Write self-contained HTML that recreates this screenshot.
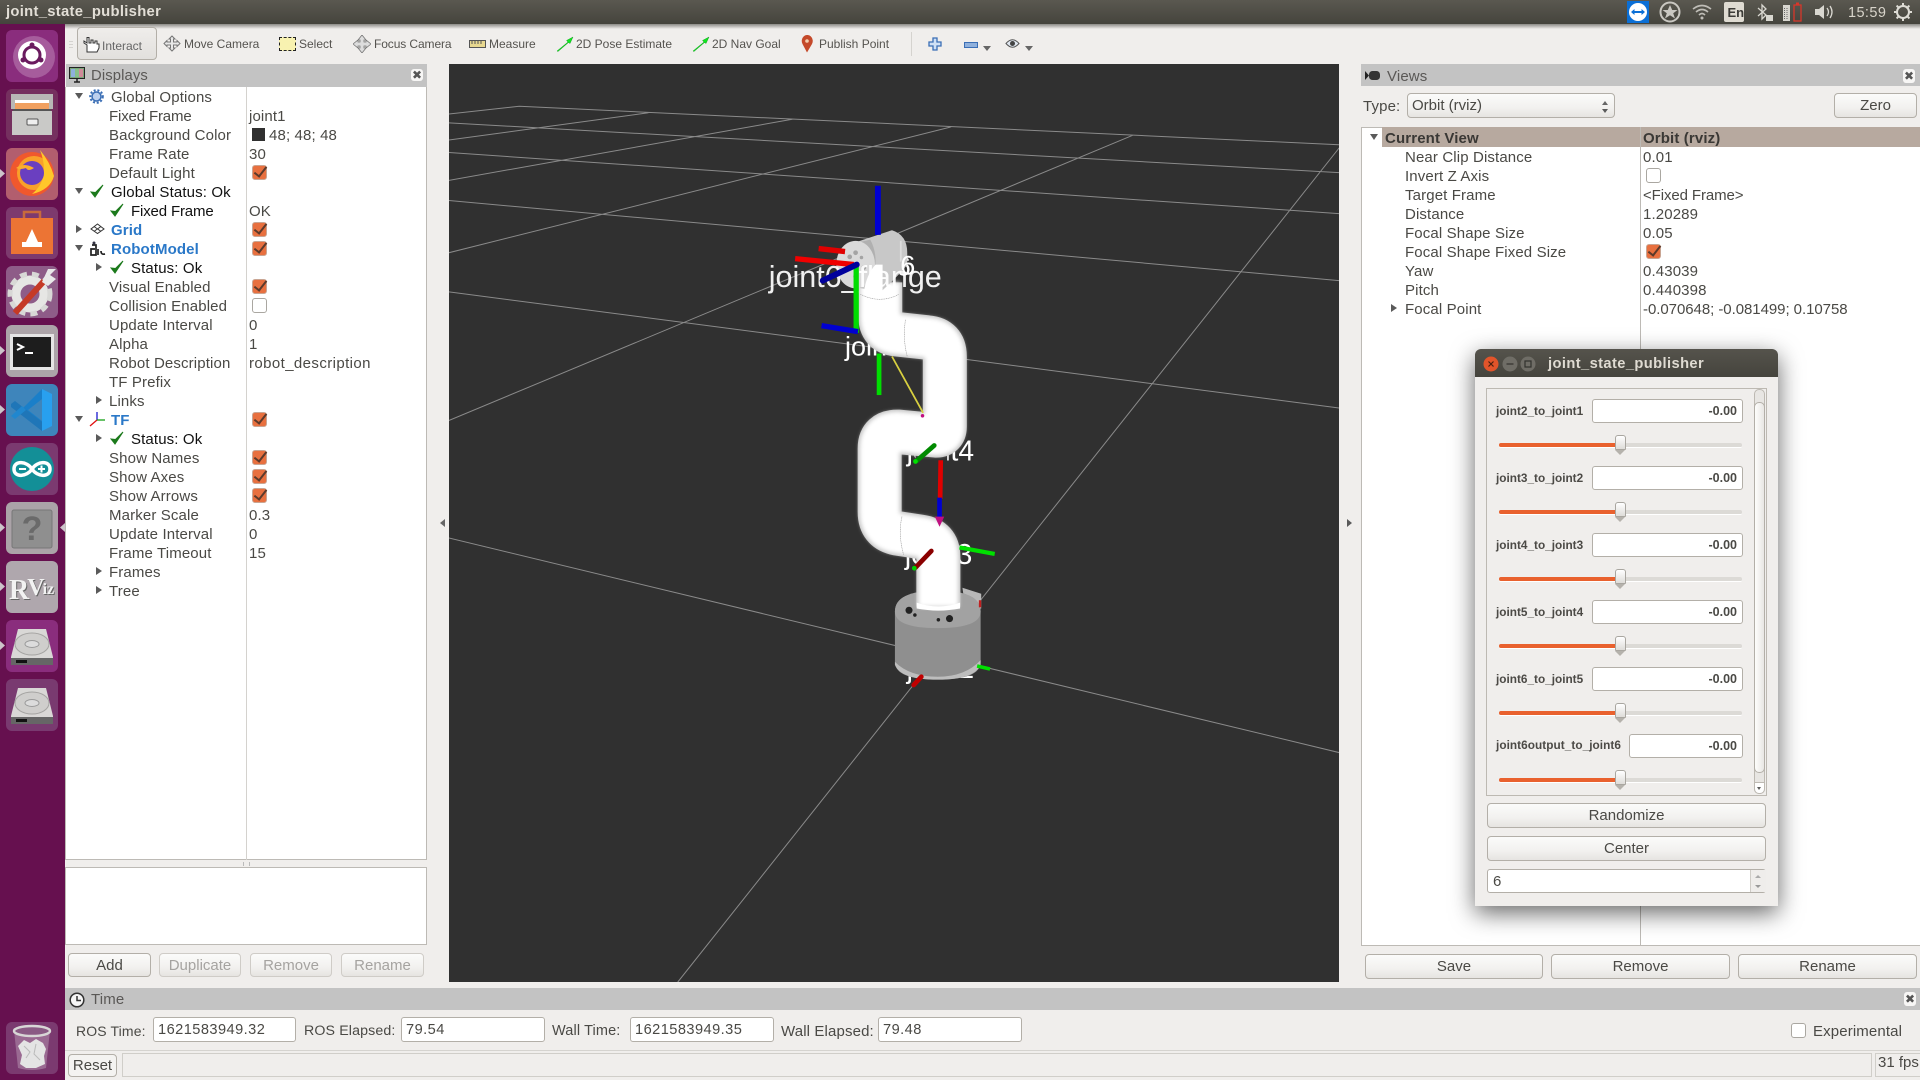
<!DOCTYPE html>
<html><head><meta charset="utf-8"><title>joint_state_publisher</title>
<style>
html,body{margin:0;padding:0;width:1920px;height:1080px;overflow:hidden;background:#f0eeec}
body{position:relative;font-family:"Liberation Sans",sans-serif;font-size:15px;color:#4a4945}
.a,.t,.b,.bar,.cb,.ub,.ad,.ar,.in,svg.p{position:absolute}
.t{white-space:nowrap;line-height:19px;letter-spacing:.13px;margin-top:1px}
.k{color:#111}
.bl{color:#2a78c8;font-weight:bold;font-size:15px}
.tb{font-size:12px;line-height:16px;top:36px;color:#55534f;letter-spacing:0;margin-top:0}
.bar{background:#c3c3c3}
.b{box-sizing:border-box;border:1px solid #b3afa8;border-radius:4px;background:linear-gradient(#fbfbfa,#f2f1ef 60%,#e6e4e1);text-align:center;line-height:24px;font-size:15px;color:#4a4945;white-space:nowrap}
.dis{color:#a5a3a0;border-color:#cfccc7}
.in{box-sizing:border-box;border:1px solid #b3afa8;border-radius:3px;background:#fff;line-height:24px;white-space:nowrap;color:#4a4945}
.ti{letter-spacing:.45px;font-size:14.6px}
.cb,.ub{left:252px;width:15px;height:15px;box-sizing:border-box;border-radius:3px}
.cb{background:#e8703f;border:1px solid #c9a593}
.ub{background:#fff;border:1px solid #aaa7a1}
.cb:after{content:"";position:absolute;left:4px;top:-2px;width:5px;height:11px;border:solid #5c3a2b;border-width:0 2.5px 2.5px 0;transform:rotate(38deg)}
.ad{width:0;height:0;border-left:4px solid transparent;border-right:4px solid transparent;border-top:6px solid #5a5a5a}
.ar{width:0;height:0;border-top:4px solid transparent;border-bottom:4px solid transparent;border-left:6px solid #5a5a5a}
.x{position:absolute;width:12px;height:12px;background:#f7f6f5;border-radius:3px;color:#555;font:bold 12px/12px "DejaVu Sans",sans-serif;text-align:center}
.lab{position:absolute;left:1496px;font:bold 11.8px/16px "Liberation Sans",sans-serif;color:#4c4a46;white-space:nowrap}
.val{font:bold 12.5px/22px "Liberation Sans",sans-serif;text-align:right;padding-right:5px;top:0}
.tr{position:absolute;left:1499px;width:243px;height:4px;background:#dcdad6;border-radius:2px;border-bottom:1px solid #fff;margin-top:1px}
.fi{position:absolute;left:1499px;width:121px;height:4px;background:#e9612e;border-radius:2px;margin-top:1px}
.th{position:absolute;left:1615px;width:9px;height:13px;background:linear-gradient(#fff,#dedcd8);border:1px solid #a9a6a0;border-radius:3px 3px 1px 1px;margin-top:0}
.th2{position:absolute;left:1615px;width:0;height:0;border-left:5.5px solid transparent;border-right:5.5px solid transparent;border-top:5px solid #b5b2ac;margin-top:1px}
</style></head><body>
<svg width="0" height="0" style="position:absolute"><defs>
<symbol id="tick" viewBox="0 0 14 14"><path d="M1 8 L5 13 L13 1 L5.5 8.5 Z" fill="#1c7a1c" stroke="#1c7a1c" stroke-width="1"/></symbol>
<symbol id="disk" viewBox="0 0 52 52"><path d="M12 9H40L47 37V45H5V37Z" fill="#d9d8d6"/><ellipse cx="26" cy="24" rx="17" ry="11" fill="#cfcecc" stroke="#a5a4a2"/><ellipse cx="26" cy="24" rx="7" ry="3.500" fill="#dcdcdc" stroke="#9a9a9a"/><rect x="5" y="38" width="42" height="7" fill="#666"/><rect x="10" y="40" width="11" height="3" fill="#111"/></symbol>
</defs></svg>

<!-- top bar -->
<div class="a" style="left:0;top:0;width:1920px;height:24px;background:linear-gradient(#5a5850,#45443d)"></div>
<div class="a" style="left:65px;top:24px;width:1855px;height:5px;background:linear-gradient(#8b8a86,#f0eeec)"></div>
<div class="t" style="left:6px;top:2px;font-weight:bold;font-size:14.800px;color:#e2ded6;letter-spacing:.3px">joint_state_publisher</div>
<svg class="p" style="left:1620px;top:0" width="300" height="24">
<rect x="7" y="1" width="22" height="22" fill="#0b6fd6"/><circle cx="18" cy="12" r="9" fill="#fff"/><path d="M11 12L14.500 9V11H21.500V9L25 12L21.500 15V13H14.500V15Z" fill="#0b6fd6"/>
<circle cx="50" cy="12" r="9.500" fill="none" stroke="#c9c7c1" stroke-width="2"/><path d="M50 5L52.200 10H57.500L53.200 13.200L55 18.500L50 15.300L45 18.500L46.800 13.200L42.500 10H47.800Z" fill="#c9c7c1"/>
<path d="M73 9Q82 2 91 9M76 12Q82 7 88 12M79 15Q82 12 85 15" fill="none" stroke="#bfbdb7" stroke-width="1.600"/><circle cx="82" cy="18" r="1.500" fill="#bfbdb7"/>
<rect x="104" y="2" width="20" height="20" rx="2" fill="#dfdbd2"/><text x="107.500" y="17" font-family="Liberation Sans" font-size="13" font-weight="bold" fill="#3c3b37">En</text>
<path d="M138 8L146 15L142 19V5L146 9L138 16" fill="none" stroke="#d9d7d0" stroke-width="1.300"/><rect x="146" y="15" width="7" height="6" fill="#d9d7d0"/>
<rect x="163" y="5" width="7" height="16" fill="#d9d7d0"/><path d="M164.500 8v11M167 8v11" stroke="#666" stroke-dasharray="1 1"/><rect x="174" y="5" width="7" height="16" fill="none" stroke="#d8362a" stroke-width="1.300"/><rect x="176" y="2.500" width="3" height="2" fill="#d8362a"/>
<path d="M195 9H199L204 5V19L199 15H195Z" fill="#d9d7d0"/><path d="M207 8Q210 12 207 16M210 6Q214 12 210 18" fill="none" stroke="#d9d7d0" stroke-width="1.300"/>
<text x="228" y="17" font-family="Liberation Sans" font-size="14.500" fill="#d8d4ca" letter-spacing=".4">15:59</text>
<circle cx="283" cy="12" r="6" fill="none" stroke="#dedcd5" stroke-width="2"/><path d="M283 3V7M283 17V21M274 12H278M288 12H292M276.600 5.600L279.500 8.500M289.400 5.600L286.500 8.500M276.600 18.400L279.500 15.500M289.400 18.400L286.500 15.500" stroke="#dedcd5" stroke-width="2"/>
</svg>

<!-- launcher -->
<svg class="p" style="left:0;top:24px;background:#66104f" width="65" height="1056" viewBox="0 24 65 1056">
<g transform="translate(6,30)"><rect width="52" height="52" rx="6" fill="#8a2d7d"/><circle cx="28" cy="27" r="21" fill="#a65c9c"/><circle cx="26" cy="25" r="14" fill="#fff"/><circle cx="26" cy="25" r="8" fill="none" stroke="#6a1b5f" stroke-width="3"/><circle cx="26" cy="15" r="2.500" fill="#6a1b5f"/><circle cx="17" cy="30" r="2.500" fill="#6a1b5f"/><circle cx="35" cy="30" r="2.500" fill="#6a1b5f"/></g>
<g transform="translate(6,89)"><rect width="52" height="52" rx="6" fill="#75305f"/><path d="M5 5H47V20H5Z" fill="#b8b8b6"/><rect x="9" y="13" width="34" height="7" fill="#f0a060"/><rect x="9" y="11" width="34" height="3" fill="#fff"/><rect x="7" y="20" width="38" height="2" fill="#555"/><path d="M6 22H46V46H6Z" fill="#c9c9c7"/><rect x="21" y="30" width="11" height="6" rx="1" fill="#eee" stroke="#555"/></g>
<g transform="translate(6,148)"><rect width="52" height="52" rx="6" fill="#b25e6e"/><circle cx="26" cy="26" r="22" fill="#f0582d"/><circle cx="28" cy="25" r="17" fill="#f9a02a"/><path d="M34 2Q44 14 48 28Q44 42 26 46Q38 36 38 22Q38 12 34 2" fill="#ffc72a"/><circle cx="26" cy="25" r="12" fill="#6a3fc0"/><path d="M10 20Q18 14 28 20Q22 24 20 20Q14 22 10 20Z" fill="#fbae2e"/></g>
<g transform="translate(6,207)"><rect width="52" height="52" rx="6" fill="#7d3a6e"/><path d="M5 11H47V47H5Z" fill="#ec7434"/><path d="M18 11V5H34V11" fill="none" stroke="#c86a3c" stroke-width="2.500"/><path d="M26 22L20 35H32Z M16 35H36V40H16Z" fill="#fff"/></g>
<g transform="translate(6,266)"><rect width="52" height="52" rx="6" fill="#8e5c88"/><circle cx="24" cy="28" r="14" fill="none" stroke="#e6e6e4" stroke-width="9"/><circle cx="24" cy="28" r="20" fill="none" stroke="#d8d8d6" stroke-width="5" stroke-dasharray="7 5"/><path d="M9 47L38 15" stroke="#c53a26" stroke-width="6"/><path d="M36 16L42 3L50 3L44 9L50 13L42 20Z" fill="#e8e8e8"/></g>
<g transform="translate(6,325)"><rect width="52" height="52" rx="6" fill="#aca4a9"/><rect x="4" y="9" width="44" height="36" fill="#e5e5e5"/><rect x="7" y="12" width="38" height="30" fill="#1d1d1d"/><path d="M11 19L17 22L11 25" fill="none" stroke="#fff" stroke-width="2"/><rect x="19" y="27" width="8" height="2" fill="#fff"/></g>
<g transform="translate(6,384)"><rect width="52" height="52" rx="6" fill="#3e85bb"/><path d="M36 5L46 10V42L36 47Z" fill="#28a0ef"/><path d="M36 5L15 26L36 47L36 37L22 26L36 15Z" fill="#1a7fc9"/><path d="M5 20L9 17L36 38V47L5 23Z" fill="#1f76b8"/><path d="M5 32L9 35L20 26L16 22Z" fill="#2087cf"/></g>
<g transform="translate(6,443)"><rect width="52" height="52" rx="6" fill="#7b3a70"/><circle cx="26" cy="26" r="22" fill="#138f97"/><path d="M26 26C21 18 8 17 8 26C8 35 21 34 26 26C31 18 44 17 44 26C44 35 31 34 26 26Z" fill="none" stroke="#fff" stroke-width="3.500"/><path d="M13 26H20M32 26H39M35.500 22.500V29.500" stroke="#fff" stroke-width="2"/></g>
<g transform="translate(6,502)"><rect width="52" height="52" rx="6" fill="#aba3a8"/><rect x="6" y="8" width="40" height="38" rx="2" fill="#8f8f8f" stroke="#777"/><text x="26" y="38" font-family="Liberation Sans" font-weight="bold" font-size="34" text-anchor="middle" fill="#6a6a6a">?</text></g>
<g transform="translate(6,561)"><rect width="52" height="52" rx="6" fill="#afa7ad"/><text x="3" y="38" font-family="Liberation Serif" font-weight="bold" font-size="28" fill="#f2f2f2" style="filter:drop-shadow(1px 1px 0 #666)">R<tspan dx="-2" dy="-4" font-size="24">V</tspan><tspan dx="-2" dy="-1" font-size="16">iz</tspan></text></g>
<g transform="translate(6,620)"><rect width="52" height="52" rx="6" fill="#8a2d7d"/><use href="#disk" width="52" height="52"/></g>
<g transform="translate(6,679)"><rect width="52" height="52" rx="6" fill="#793a70"/><use href="#disk" width="52" height="52"/></g>
<g transform="translate(6,1022)"><rect width="52" height="52" rx="6" fill="#7b3a70"/><path d="M8 8H44L40 46Q26 50 12 46Z" fill="#9a6a92"/><ellipse cx="26" cy="9" rx="18" ry="5" fill="#8a5a84" stroke="#d8d6d6" stroke-width="2.500"/><path d="M12 24L18 18L24 21L30 17L37 21L40 27L38 34L39 42L30 46L20 46L14 42L16 33Z" fill="#e4e4e4"/><path d="M18 24L24 30L20 36M30 22L28 32L34 38" fill="none" stroke="#bbb"/></g>
<path d="M0 169L5 173.500L0 178Z M0 346L5 350.500L0 355Z M0 405L5 409.500L0 414Z M0 523L5 527.500L0 532Z M0 582L5 586.500L0 591Z M0 641L5 645.500L0 650Z" fill="#ccc4ca"/>
<path d="M65 523L60 527.500L65 532Z" fill="#ccc4ca"/>
</svg>

<!-- toolbar -->
<div class="a" style="left:69px;top:41px;width:4px;height:8px;background:repeating-linear-gradient(#d5d3d0 0 1px,transparent 1px 3px)"></div>
<div class="a" style="left:77px;top:27px;width:80px;height:33px;box-sizing:border-box;border:1px solid #b3afa8;border-radius:4px;background:linear-gradient(#efedeb,#e2e0dd)"></div>
<svg class="p" style="left:81px;top:36px" width="20" height="18"><path d="M6 16V9L3 7V5L6 7V1.500H8V7H10V4H12V7H14V5H16V8H18V12L16 16Z" fill="#fff" stroke="#333" stroke-width="1"/></svg>
<div class="t tb" style="left:102px;top:38px;color:#666">Interact</div>
<svg class="p" style="left:163px;top:35px" width="18" height="18"><path d="M9 1L12 4H10.500V7H14V5.500L17 8.500L14 11.500V10H10.500V13H12L9 16L6 13H7.500V10H4V11.500L1 8.500L4 5.500V7H7.500V4H6Z" fill="#e8e8e8" stroke="#777"/></svg>
<div class="t tb" style="left:184px">Move Camera</div>
<div class="a" style="left:279px;top:37px;width:15px;height:12px;background:#f8f2b0;border:1px dashed #222"></div>
<div class="t tb" style="left:299px">Select</div>
<svg class="p" style="left:353px;top:35px" width="18" height="18"><path d="M9 0L13 5H11V7H13V5L18 9L13 13V11H11V13H13L9 18L5 13H7V11H5V13L0 9L5 5V7H7V5H5Z" fill="#ddd" stroke="#777" stroke-width=".8"/></svg>
<div class="t tb" style="left:374px;letter-spacing:-.1px">Focus Camera</div>
<svg class="p" style="left:469px;top:40px" width="17" height="9"><rect x=".5" y=".5" width="16" height="7" fill="#e8d890" stroke="#555"/><path d="M3 1v3M6 1v3M9 1v3M12 1v3" stroke="#555"/></svg>
<div class="t tb" style="left:489px">Measure</div>
<svg class="p" style="left:556px;top:36px" width="18" height="16"><path d="M1 15L12 6L10.500 4.500L17 1L14 7.500L12.500 6.500L2 15.500Z" fill="#0ee81e" stroke="#098c14" stroke-width=".4"/></svg>
<div class="t tb" style="left:576px">2D Pose Estimate</div>
<svg class="p" style="left:692px;top:36px" width="18" height="16"><path d="M1 15L12 6L10.500 4.500L17 1L14 7.500L12.500 6.500L2 15.500Z" fill="#0ee81e" stroke="#098c14" stroke-width=".4"/></svg>
<div class="t tb" style="left:712px">2D Nav Goal</div>
<svg class="p" style="left:801px;top:35px" width="13" height="18"><path d="M6 17.500L1.500 9A5.500 6 0 1 1 11 9Z" fill="#c4492a"/><circle cx="6" cy="6" r="1.800" fill="#f3d0b0"/></svg>
<div class="t tb" style="left:819px">Publish Point</div>
<div class="a" style="left:911px;top:32px;width:1px;height:24px;background:#d5d3cf"></div>
<svg class="p" style="left:928px;top:37px" width="14" height="14"><path d="M5 1H9V5H13V9H9V13H5V9H1V5H5Z" fill="#cfe0f5" stroke="#3a6eb5" stroke-width="1.300"/></svg>
<div class="a" style="left:964px;top:42px;width:12px;height:4px;background:#8fb0dc;border:1px solid #3a6eb5"></div>
<div class="ad" style="left:983px;top:46px;border-top-color:#666;border-top-width:5px"></div>
<svg class="p" style="left:1005px;top:38px" width="15" height="11"><path d="M1 5.500Q7.500 -2 14 5.500Q7.500 13 1 5.500Z" fill="#dfe6ef" stroke="#555"/><circle cx="7.500" cy="5.500" r="2.500" fill="#444"/></svg>
<div class="ad" style="left:1025px;top:46px;border-top-color:#666;border-top-width:5px"></div>

<!-- Displays panel -->
<div class="bar" style="left:66px;top:64px;width:361px;height:23px"></div>
<svg class="p" style="left:69px;top:67px" width="17" height="17"><rect x=".5" y=".5" width="15" height="11" fill="#7aa67a" stroke="#222"/><rect x="2" y="2" width="4" height="8" fill="#8fb0dc"/><rect x="6" y="2" width="4" height="8" fill="#88c088"/><rect x="10" y="2" width="4" height="8" fill="#d08a9a"/><path d="M5 15H11M8 12V15" stroke="#222" stroke-width="1.500"/></svg>
<div class="t" style="left:91px;top:66px;font-size:14.800px;color:#5a5856">Displays</div>
<div class="x" style="left:411px;top:69px">✖</div>
<div class="a" style="left:65px;top:87px;width:362px;height:773px;box-sizing:border-box;background:#fff;border:1px solid #bdbab5;border-top:0"></div>
<div class="a" style="left:246px;top:87px;width:1px;height:773px;background:#d4d2ce"></div>

<div class="ad" style="left:75px;top:93px"></div>
<svg class="p" style="left:89px;top:89px" width="15" height="15"><circle cx="7.500" cy="7.500" r="4.500" fill="#bcd0ee" stroke="#3a6eb5" stroke-width="1.500"/><circle cx="7.500" cy="7.500" r="6.300" fill="none" stroke="#3a6eb5" stroke-width="2" stroke-dasharray="2 1.800"/></svg>
<div class="t" style="left:111px;top:87px">Global Options</div>
<div class="t" style="left:109px;top:106px;letter-spacing:-.15px">Fixed Frame</div><div class="t" style="left:249px;top:106px">joint1</div>
<div class="t" style="left:109px;top:125px">Background Color</div><div class="a" style="left:252px;top:128px;width:13px;height:13px;background:#303030"></div><div class="t" style="left:269px;top:125px">48; 48; 48</div>
<div class="t" style="left:109px;top:144px">Frame Rate</div><div class="t" style="left:249px;top:144px">30</div>
<div class="t" style="left:109px;top:163px">Default Light</div><div class="cb" style="top:165px"></div>
<div class="ad" style="left:75px;top:188px"></div><svg class="p" style="left:90px;top:184px" width="14" height="14"><use href="#tick"/></svg>
<div class="t k" style="left:111px;top:182px">Global Status: Ok</div>
<svg class="p" style="left:110px;top:203px" width="14" height="14"><use href="#tick"/></svg>
<div class="t k" style="left:131px;top:201px;letter-spacing:-.15px">Fixed Frame</div><div class="t" style="left:249px;top:201px">OK</div>
<div class="ar" style="left:76px;top:225px"></div>
<svg class="p" style="left:90px;top:223px" width="15" height="12"><path d="M7.500 1L14 6L7.500 10.500L1 6ZM4 3.500L10.500 8M11 3.500L4.500 8" fill="none" stroke="#333"/></svg>
<div class="t bl" style="left:111px;top:220px">Grid</div><div class="cb" style="top:222px"></div>
<div class="ad" style="left:75px;top:245px"></div>
<svg class="p" style="left:89px;top:241px" width="17" height="16"><path d="M3 4H7V14H2V8H6M9 8V14M12 10Q12 14 16 13" fill="none" stroke="#222" stroke-width="1.700"/><circle cx="5" cy="2" r="1.500" fill="#334"/></svg>
<div class="t bl" style="left:111px;top:239px">RobotModel</div><div class="cb" style="top:241px"></div>
<div class="ar" style="left:96px;top:263px"></div><svg class="p" style="left:110px;top:260px" width="14" height="14"><use href="#tick"/></svg>
<div class="t k" style="left:131px;top:258px">Status: Ok</div>
<div class="t" style="left:109px;top:277px">Visual Enabled</div><div class="cb" style="top:279px"></div>
<div class="t" style="left:109px;top:296px">Collision Enabled</div><div class="ub" style="top:298px"></div>
<div class="t" style="left:109px;top:315px">Update Interval</div><div class="t" style="left:249px;top:315px">0</div>
<div class="t" style="left:109px;top:334px">Alpha</div><div class="t" style="left:249px;top:334px">1</div>
<div class="t" style="left:109px;top:353px">Robot Description</div><div class="t" style="left:249px;top:353px;letter-spacing:.4px">robot_description</div>
<div class="t" style="left:109px;top:372px">TF Prefix</div>
<div class="ar" style="left:96px;top:396px"></div><div class="t" style="left:109px;top:391px">Links</div>
<div class="ad" style="left:75px;top:416px"></div>
<svg class="p" style="left:89px;top:411px" width="17" height="16"><path d="M8 9V1" stroke="#1a1ad0" stroke-width="1.300"/><path d="M8 9H16" stroke="#15a015" stroke-width="1.300"/><path d="M8 9L1 15" stroke="#e01010" stroke-width="1.300"/></svg>
<div class="t bl" style="left:111px;top:410px">TF</div><div class="cb" style="top:412px"></div>
<div class="ar" style="left:96px;top:434px"></div><svg class="p" style="left:110px;top:431px" width="14" height="14"><use href="#tick"/></svg>
<div class="t k" style="left:131px;top:429px">Status: Ok</div>
<div class="t" style="left:109px;top:448px">Show Names</div><div class="cb" style="top:450px"></div>
<div class="t" style="left:109px;top:467px">Show Axes</div><div class="cb" style="top:469px"></div>
<div class="t" style="left:109px;top:486px">Show Arrows</div><div class="cb" style="top:488px"></div>
<div class="t" style="left:109px;top:505px">Marker Scale</div><div class="t" style="left:249px;top:505px">0.3</div>
<div class="t" style="left:109px;top:524px">Update Interval</div><div class="t" style="left:249px;top:524px">0</div>
<div class="t" style="left:109px;top:543px">Frame Timeout</div><div class="t" style="left:249px;top:543px">15</div>
<div class="ar" style="left:96px;top:567px"></div><div class="t" style="left:109px;top:562px">Frames</div>
<div class="ar" style="left:96px;top:586px"></div><div class="t" style="left:109px;top:581px">Tree</div>

<div class="a" style="left:243px;top:862px;width:7px;height:4px;border-left:1px solid #bbb;border-right:1px solid #bbb;box-sizing:border-box"></div>
<div class="a" style="left:65px;top:867px;width:362px;height:78px;box-sizing:border-box;background:#fff;border:1px solid #bdbab5"></div>
<div class="b" style="left:68px;top:953px;width:83px;height:24px">Add</div>
<div class="b dis" style="left:159px;top:953px;width:82px;height:24px">Duplicate</div>
<div class="b dis" style="left:250px;top:953px;width:82px;height:24px">Remove</div>
<div class="b dis" style="left:341px;top:953px;width:83px;height:24px">Rename</div>

<div class="ar" style="left:440px;top:519px;border-left:0;border-right:5px solid #666"></div>
<div class="ar" style="left:1347px;top:519px;border-left-width:5px"></div>

<!-- 3D viewport -->
<svg class="p" style="left:449px;top:64px;background:#303030" width="890" height="918" viewBox="0 0 890 918">
<defs><filter id="bl" filterUnits="userSpaceOnUse" x="600" y="300" width="400" height="720"><feGaussianBlur stdDeviation="3.500"/></filter>
<clipPath id="j4"><rect x="780" y="630" width="30" height="60"/><rect x="864" y="630" width="70" height="60"/></clipPath></defs>
<g transform="translate(-9,-4) scale(.587,.593)">
<path vector-effect="non-scaling-stroke" fill="none" stroke="#8a8a8a" stroke-width="1" d="M135 78L1532 143M15 106L1532 190M15 156L1532 259M15 237L1532 372M15 391L1532 587M15 806L1532 1168M15 91L135 78M15 135L355 89M15 203L600 100M15 325L870 113M15 608L1180 127M405 1555L1532 148"/>
<g font-family="Liberation Sans" fill="#fff" font-size="48">
<text x="690" y="498" font-size="46">joint2</text>
<text x="795" y="675" clip-path="url(#j4)">joint4</text>
<text x="792" y="850">joint3</text>
<text x="795" y="1042">joint1</text>
<text x="692" y="363" font-size="46">joint6</text>
</g>
<!-- base -->
<path d="M890 890L922 900V925L895 925Z" fill="#b8b8b8"/>
<path d="M775 930Q775 895 848 895Q921 895 921 930V1015Q921 1045 848 1045Q775 1045 775 1015Z" fill="#8f8f8f"/>
<path d="M775 930Q775 895 848 895Q921 895 921 930Q921 958 848 958Q775 958 775 930Z" fill="#a2a2a2"/>
<path d="M775 1015Q800 1040 848 1040Q895 1040 921 1012V1020Q910 1045 848 1045Q785 1045 775 1020Z" fill="#bdbdbd"/>
<circle cx="799" cy="928" r="6" fill="#222"/><circle cx="809" cy="936" r="3" fill="#222"/><circle cx="868" cy="942" r="6" fill="#222"/><circle cx="849" cy="944" r="3" fill="#222"/>
<rect x="918" y="911" width="4" height="12" fill="#c02020"/>
<!-- arm -->
<path d="M849 922L849 838Q849 808 818 804L778 798Q749 792 749 762L749 655Q749 627 780 627L845 633Q860 633 860 618L860 500Q860 470 830 468L775 462Q750 458 750 432L750 375" fill="none" stroke="#c4c4c4" stroke-width="75" stroke-linejoin="round"/>
<path d="M849 922L849 838Q849 808 818 804L778 798Q749 792 749 762L749 655Q749 627 780 627L845 633Q860 633 860 618L860 500Q860 470 830 468L775 462Q750 458 750 432L750 375" fill="none" stroke="#fff" stroke-width="68" stroke-linejoin="round" filter="url(#bl)"/>
<path d="M812 915Q849 928 886 915L886 925Q849 932 812 925Z" fill="#fff"/>
<path d="M793 438Q788 470 796 500M787 770Q780 800 790 835M716 395Q750 412 782 395" fill="none" stroke="#9a9a9a" stroke-width="1" stroke-dasharray="2 1"/>
<!-- head -->
<path d="M700 310L770 287Q796 295 796 325L796 345Q780 365 752 390L716 385Z" fill="#c8c8c8"/>
<path d="M702 310L733 303Q750 335 735 372L715 385Z" fill="#b0b0b0"/>
<ellipse cx="708" cy="345" rx="33" ry="40" fill="#dadada"/>
<g fill="#a4a4a4"><circle cx="708" cy="325" r="4"/><circle cx="698" cy="332" r="4"/><circle cx="718" cy="333" r="3"/><circle cx="695" cy="350" r="3"/><circle cx="722" cy="350" r="4"/><circle cx="707" cy="365" r="3"/></g>
<path d="M785 305V340" stroke="#ddd" stroke-width="3"/>
<path d="M722 392Q726 362 742 345L754 345V392Z" fill="#fff"/>
<text x="560" y="383" font-family="Liberation Sans" font-size="52" fill="#fff" fill-opacity=".93">joint6_flange</text>
<text x="784" y="362" font-family="Liberation Sans" font-size="46" fill="#fff">6</text>
<!-- axes -->
<g fill="none" stroke-linecap="butt">
<path d="M746 212V295" stroke="#0000d0" stroke-width="10"/>
<path d="M645 318L690 323" stroke="#e00000" stroke-width="9"/>
<path d="M605 335L705 345" stroke="#f00000" stroke-width="9"/>
<path d="M709 345V460" stroke="#00dd00" stroke-width="9"/>
<path d="M652 372L710 345" stroke="#00009c" stroke-width="10" stroke-linecap="round"/>
<path d="M650 448L712 458" stroke="#0000d0" stroke-width="9"/>
<path d="M748 495V565" stroke="#00dd00" stroke-width="8"/>
<path d="M770 500L823 595" stroke="#d8d040" stroke-width="3"/>
<path d="M812 676L842 650" stroke="#008a00" stroke-width="8" stroke-linecap="round"/>
<path d="M853 675L852 740" stroke="#e00000" stroke-width="8"/>
<path d="M851 738V772" stroke="#0000d0" stroke-width="8"/>
<path d="M885 822L945 833" stroke="#00e000" stroke-width="7"/>
<path d="M837 828L810 856" stroke="#8a0000" stroke-width="8" stroke-linecap="round"/>
<path d="M915 1022L937 1027" stroke="#00e000" stroke-width="6"/>
<path d="M820 1040L807 1054" stroke="#c00000" stroke-width="8" stroke-linecap="round"/>
</g>
<path d="M843 770H859L851 787Z" fill="#c01080"/><circle cx="822" cy="600" r="3" fill="#c01080"/>
<circle cx="810" cy="677" r="4" fill="#00e000"/><circle cx="808" cy="857" r="4" fill="#00d000"/>
</g>
</svg>

<!-- Views panel -->
<div class="bar" style="left:1361px;top:64px;width:559px;height:22px"></div>
<svg class="p" style="left:1365px;top:70px" width="16" height="11"><path d="M0 1L4 5.500L0 10Z" fill="#222"/><rect x="4" y="1" width="11" height="9" rx="3.500" fill="#333"/></svg>
<div class="t" style="left:1387px;top:66px;font-size:15px;color:#5a5856">Views</div>
<div class="x" style="left:1903px;top:69px;height:14px;line-height:14px">✖</div>
<div class="t" style="left:1363px;top:96px">Type:</div>
<div class="b" style="left:1407px;top:93px;width:208px;height:25px;text-align:left;padding-left:4px">Orbit (rviz)</div>
<div class="ad" style="left:1602px;top:101px;border-top:0;border-bottom:4px solid #666;border-left-width:3px;border-right-width:3px"></div>
<div class="ad" style="left:1602px;top:109px;border-top-width:4px;border-left-width:3px;border-right-width:3px"></div>
<div class="b" style="left:1834px;top:93px;width:83px;height:25px">Zero</div>
<div class="a" style="left:1361px;top:127px;width:559px;height:819px;box-sizing:border-box;background:#fff;border:1px solid #bdbab5;border-right:0"></div>
<div class="a" style="left:1382px;top:127px;width:538px;height:20px;background:#b7a99f"></div>
<div class="a" style="left:1640px;top:127px;width:1px;height:819px;background:#bdbab5"></div>
<div class="ad" style="left:1370px;top:134px"></div>
<div class="t" style="left:1385px;top:128px;font-weight:bold;font-size:15px;color:#3a3835">Current View</div>
<div class="t" style="left:1643px;top:128px;font-weight:bold;font-size:15px;color:#3a3835">Orbit (rviz)</div>
<div class="t" style="left:1405px;top:147px">Near Clip Distance</div><div class="t" style="left:1643px;top:147px">0.01</div>
<div class="t" style="left:1405px;top:166px">Invert Z Axis</div><div class="ub" style="left:1646px;top:168px"></div>
<div class="t" style="left:1405px;top:185px">Target Frame</div><div class="t" style="left:1643px;top:185px;letter-spacing:-.1px">&lt;Fixed Frame&gt;</div>
<div class="t" style="left:1405px;top:204px">Distance</div><div class="t" style="left:1643px;top:204px">1.20289</div>
<div class="t" style="left:1405px;top:223px">Focal Shape Size</div><div class="t" style="left:1643px;top:223px">0.05</div>
<div class="t" style="left:1405px;top:242px">Focal Shape Fixed Size</div><div class="cb" style="left:1646px;top:244px"></div>
<div class="t" style="left:1405px;top:261px">Yaw</div><div class="t" style="left:1643px;top:261px">0.43039</div>
<div class="t" style="left:1405px;top:280px">Pitch</div><div class="t" style="left:1643px;top:280px">0.440398</div>
<div class="ar" style="left:1391px;top:304px"></div><div class="t" style="left:1405px;top:299px">Focal Point</div><div class="t" style="left:1643px;top:299px;letter-spacing:-.05px">-0.070648; -0.081499; 0.10758</div>
<div class="b" style="left:1365px;top:954px;width:178px;height:25px">Save</div>
<div class="b" style="left:1551px;top:954px;width:179px;height:25px">Remove</div>
<div class="b" style="left:1738px;top:954px;width:179px;height:25px">Rename</div>

<!-- Time panel -->
<div class="bar" style="left:65px;top:988px;width:1855px;height:22px"></div>
<svg class="p" style="left:69px;top:992px" width="16" height="16"><circle cx="8" cy="8" r="6.800" fill="#f5f5f5" stroke="#333" stroke-width="1.500"/><path d="M8 4V8.500H12" fill="none" stroke="#333" stroke-width="1.500"/></svg>
<div class="t" style="left:91px;top:989px;font-size:15px;color:#5a5856">Time</div>
<div class="x" style="left:1904px;top:992px;height:14px;line-height:14px">✖</div>
<div class="t" style="left:76px;top:1021px;font-size:14px">ROS Time:</div><div class="in ti" style="left:153px;top:1017px;width:143px;height:25px;padding-left:4px">1621583949.32</div>
<div class="t" style="left:304px;top:1021px;font-size:14.200px">ROS Elapsed:</div><div class="in ti" style="left:401px;top:1017px;width:144px;height:25px;padding-left:4px">79.54</div>
<div class="t" style="left:552px;top:1021px;font-size:14.500px">Wall Time:</div><div class="in ti" style="left:630px;top:1017px;width:144px;height:25px;padding-left:4px">1621583949.35</div>
<div class="t" style="left:781px;top:1021px">Wall Elapsed:</div><div class="in ti" style="left:878px;top:1017px;width:144px;height:25px;padding-left:4px">79.48</div>
<div class="ub" style="left:1791px;top:1023px"></div><div class="t" style="left:1813px;top:1021px">Experimental</div>
<div class="a" style="left:65px;top:1050px;width:1855px;height:1px;background:#d5d3cf"></div>
<div class="b" style="left:68px;top:1054px;width:49px;height:23px;line-height:22px;background:#f4f3f1">Reset</div>
<div class="a" style="left:122px;top:1053px;width:1750px;height:24px;box-sizing:border-box;border:1px solid #d0cec9"></div>
<div class="a" style="left:1875px;top:1053px;width:45px;height:24px;box-sizing:border-box;border:1px solid #d0cec9;border-right:0"></div>
<div class="t" style="left:1878px;top:1052px;letter-spacing:0">31 fps</div>

<!-- dialog -->
<div class="a" style="left:1475px;top:349px;width:303px;height:557px;background:#f0eeec;border-radius:6px 6px 0 0;box-shadow:0 7px 24px rgba(0,0,0,.6)"></div>
<div class="a" style="left:1475px;top:349px;width:303px;height:28px;background:linear-gradient(#55534c,#45443d);border-radius:6px 6px 0 0"></div>
<svg class="p" style="left:1480px;top:352px" width="60" height="24"><circle cx="11" cy="12" r="7.500" fill="#e2542a"/><path d="M8.500 9.500L13.500 14.500M13.500 9.500L8.500 14.500" stroke="#4a2010" stroke-width="1.200"/><circle cx="30" cy="12" r="7.500" fill="#6f6d66"/><path d="M26.500 12H33.500" stroke="#33322e" stroke-width="1.200"/><circle cx="48" cy="12" r="7.500" fill="#6f6d66"/><rect x="45" y="9" width="6" height="6" fill="none" stroke="#33322e" stroke-width="1.200"/></svg>
<div class="t" style="left:1548px;top:354px;font-weight:bold;font-size:14.700px;color:#dfdbd2;letter-spacing:.4px">joint_state_publisher</div>
<div class="a" style="left:1486px;top:388px;width:281px;height:408px;box-sizing:border-box;border:1px solid #bdb9b2"></div>

<div class="lab" style="top:403px">joint2_to_joint1</div><div class="in val" style="left:1592px;top:399px;width:151px;height:24px">-0.00</div>
<div class="tr" style="top:442px"></div><div class="fi" style="top:442px"></div><div class="th" style="top:435px"></div><div class="th2" style="top:449px"></div>
<div class="lab" style="top:470px">joint3_to_joint2</div><div class="in val" style="left:1592px;top:466px;width:151px;height:24px">-0.00</div>
<div class="tr" style="top:509px"></div><div class="fi" style="top:509px"></div><div class="th" style="top:502px"></div><div class="th2" style="top:516px"></div>
<div class="lab" style="top:537px">joint4_to_joint3</div><div class="in val" style="left:1592px;top:533px;width:151px;height:24px">-0.00</div>
<div class="tr" style="top:576px"></div><div class="fi" style="top:576px"></div><div class="th" style="top:569px"></div><div class="th2" style="top:583px"></div>
<div class="lab" style="top:604px">joint5_to_joint4</div><div class="in val" style="left:1592px;top:600px;width:151px;height:24px">-0.00</div>
<div class="tr" style="top:643px"></div><div class="fi" style="top:643px"></div><div class="th" style="top:636px"></div><div class="th2" style="top:650px"></div>
<div class="lab" style="top:671px">joint6_to_joint5</div><div class="in val" style="left:1592px;top:667px;width:151px;height:24px">-0.00</div>
<div class="tr" style="top:710px"></div><div class="fi" style="top:710px"></div><div class="th" style="top:703px"></div><div class="th2" style="top:717px"></div>
<div class="lab" style="top:737px;letter-spacing:.05px">joint6output_to_joint6</div><div class="in val" style="left:1629px;top:734px;width:114px;height:24px">-0.00</div>
<div class="tr" style="top:777px"></div><div class="fi" style="top:777px"></div><div class="th" style="top:770px"></div><div class="th2" style="top:784px"></div>

<div class="a" style="left:1754px;top:389px;width:11px;height:405px;box-sizing:border-box;border:1px solid #bdb9b2;border-radius:5px;background:#e8e6e3"></div>
<div class="a" style="left:1754px;top:402px;width:11px;height:371px;box-sizing:border-box;border:1px solid #b3afa8;border-radius:5px;background:linear-gradient(90deg,#fdfdfc,#e9e7e4)"></div>
<div class="a" style="left:1754px;top:782px;width:11px;height:12px;box-sizing:border-box;border:1px solid #bdb9b2;border-radius:0 0 5px 5px;background:#fff"></div>
<div class="ad" style="left:1757px;top:787px;border-left-width:2.5px;border-right-width:2.5px;border-top-width:3px"></div>

<div class="b" style="left:1487px;top:803px;width:279px;height:25px">Randomize</div>
<div class="b" style="left:1487px;top:836px;width:279px;height:25px">Center</div>
<div class="in" style="left:1487px;top:869px;width:279px;height:24px;padding-left:5px;line-height:24px">6</div>
<div class="a" style="left:1750px;top:870px;width:15px;height:22px;background:#efedeb;border-left:1px solid #cfccc7"></div>
<div class="ad" style="left:1755px;top:875px;border-top:0;border-bottom:3px solid #aaa;border-left-width:3px;border-right-width:3px"></div>
<div class="ad" style="left:1755px;top:885px;border-top:3px solid #999;border-left-width:3px;border-right-width:3px"></div>
</body></html>
